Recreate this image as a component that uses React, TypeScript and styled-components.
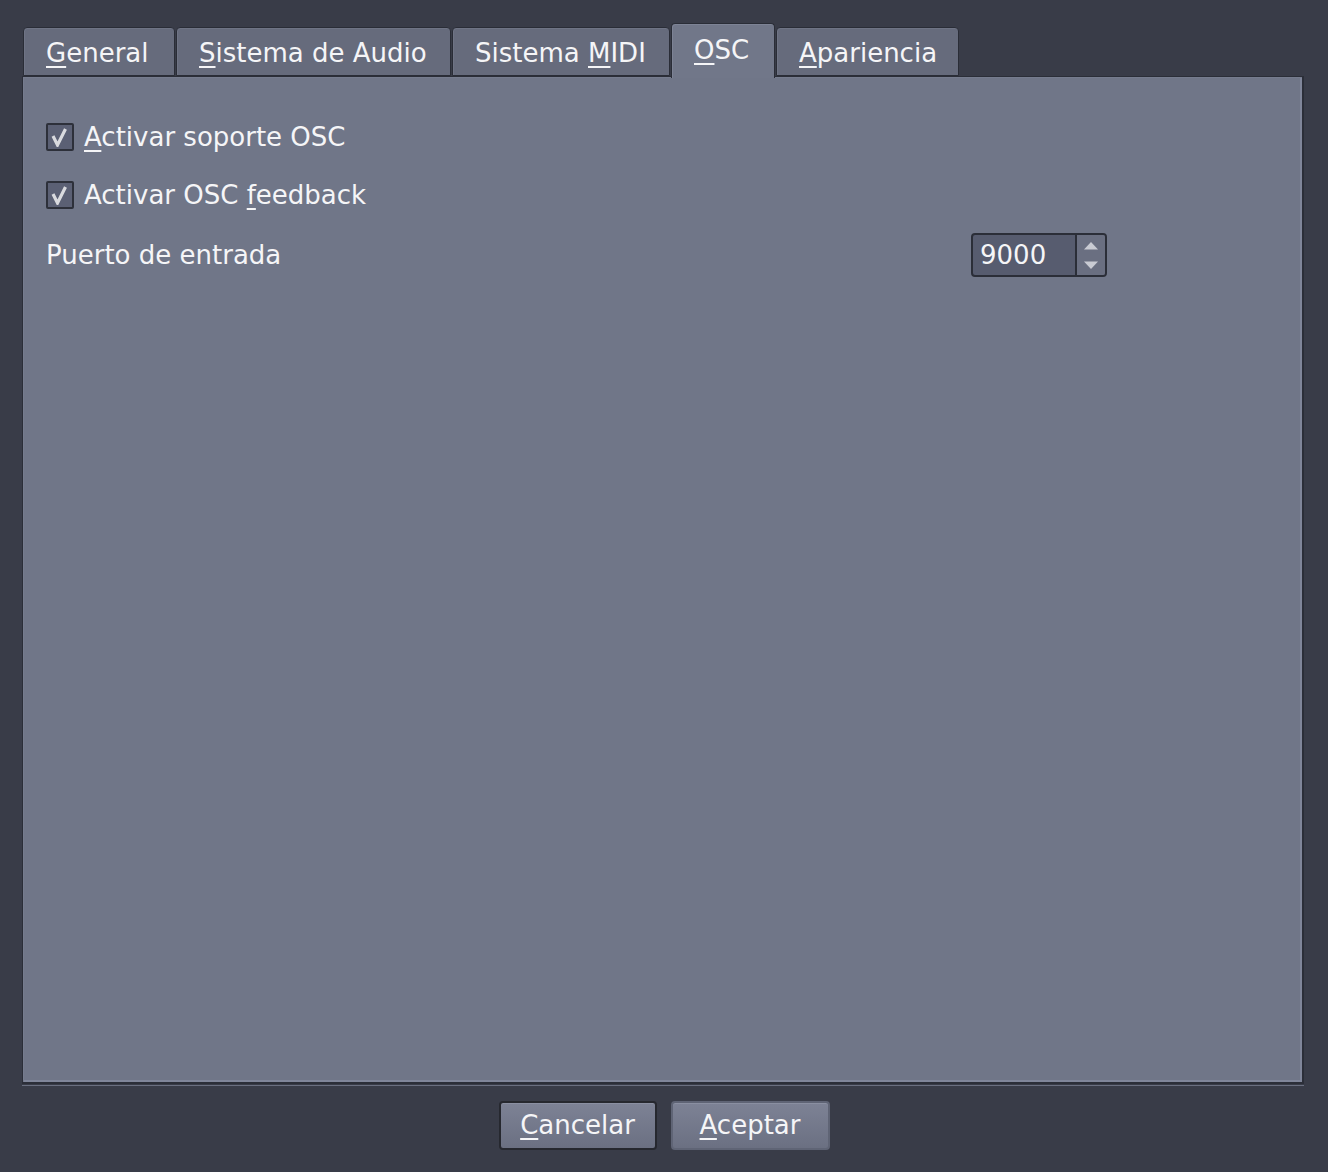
import React from "react";
import styled, { createGlobalStyle } from "styled-components";

const Global = createGlobalStyle`
  html, body {
    margin: 0;
    padding: 0;
    background: #393c48;
  }
  body {
    font-family: "DejaVu Sans", "Noto Sans", sans-serif;
    font-size: 26px;
    color: #f5f5f7;
  }
`;

const Window = styled.div`
  width: 1328px;
  height: 1172px;
  box-sizing: border-box;
  padding: 23px 24px 0 22px;
  display: flex;
  flex-direction: column;
  background: #393c48;
`;

const TabBar = styled.div`
  display: flex;
  align-items: flex-end;
  gap: 1px;
  height: 53px;
  padding-left: 1px;
  position: relative;
  z-index: 2;
`;

const Tab = styled.div<{ $active?: boolean; $w: number }>`
  box-sizing: border-box;
  width: ${(p) => p.$w}px;
  height: ${(p) => (p.$active ? "55px" : "49px")};
  margin-bottom: ${(p) => (p.$active ? "-2px" : "0")};
  padding: ${(p) => (p.$active ? "0 0 3px 22px" : "3px 0 0 22px")};
  display: flex;
  align-items: center;
  border: 1px solid #2a2d37;
  border-bottom: ${(p) => (p.$active ? "none" : "1px solid #2a2d37")};
  border-radius: 4px 4px 0 0;
  background: ${(p) => (p.$active ? "#717789" : "#666b7c")};
  box-shadow: inset 1px 1px 0 ${(p) => (p.$active ? "#7d8395" : "#6f7485")};
  white-space: nowrap;
  line-height: 1;
`;

const Mn = styled.u`
  text-decoration-thickness: 2px;
  text-underline-offset: 4px;
`;

const Panel = styled.div`
  box-sizing: border-box;
  height: 1008px;
  background: #707688;
  border: 1px solid #2b2e38;
  border-right-width: 2px;
  border-bottom-width: 2px;
  box-shadow: inset 1px 1px 0 #767c8e, inset -2px -2px 0 #80869a;
  padding: 40px 23px 0 23px;
  display: flex;
  flex-direction: column;
  gap: 18px;
`;

const Separator = styled.div`
  height: 1px;
  margin-top: 1px;
  background: #6a6f80;
`;

const CheckRow = styled.label`
  display: flex;
  align-items: center;
  height: 40px;
  gap: 10px;
  line-height: 1;
`;

const CheckBox = styled.span`
  box-sizing: border-box;
  width: 28px;
  height: 28px;
  border: 2px solid #2d303a;
  border-radius: 2px;
  background: #5b6074;
  display: flex;
  align-items: center;
  justify-content: center;
`;

const FormRow = styled.div`
  display: grid;
  grid-template-columns: 925px 136px 1fr;
  align-items: center;
  height: 44px;
  line-height: 1;
`;

const Spin = styled.div`
  box-sizing: border-box;
  height: 44px;
  border: 2px solid #2b2e38;
  border-radius: 4px;
  display: flex;
  overflow: hidden;
  background: #575c6f;
`;

const SpinText = styled.div`
  flex: 1;
  display: flex;
  align-items: center;
  padding-left: 7px;
  border-right: 2px solid #2b2e38;
`;

const SpinButtons = styled.div`
  width: 28px;
  display: flex;
  flex-direction: column;
  align-items: center;
  justify-content: space-between;
  padding: 6px 0 5px;
  box-sizing: border-box;
  background: #6a6f81;
`;

const ButtonRow = styled.div`
  display: flex;
  justify-content: center;
  gap: 14px;
  padding-top: 15px;
  padding-left: 2px;
`;

const Button = styled.button<{ $focus?: boolean }>`
  box-sizing: border-box;
  height: 49px;
  width: ${(p) => (p.$focus ? "158px" : "159px")};
  font-family: "DejaVu Sans", "Noto Sans", sans-serif;
  font-size: 26px;
  color: #f5f5f7;
  border-radius: 4px;
  border: 2px solid ${(p) => (p.$focus ? "#26282f" : "#5f6475")};
  background: linear-gradient(#7d8295, #6b7082);
  box-shadow: inset 0 1px 0 #8a8fa1;
  padding: 0 0 2px 0;
  line-height: 1;
`;

const Check = () => (
  <svg width="20" height="20" viewBox="0 0 20 20">
    <polyline
      points="3,9 7.5,18 15.5,2"
      fill="none"
      stroke="#d9dade"
      strokeWidth="3.2"
      strokeLinejoin="miter"
    />
  </svg>
);

const Arrow = ({ up }: { up?: boolean }) => (
  <svg width="16" height="9" viewBox="0 0 16 9">
    <polygon points={up ? "1,8.5 15,8.5 8,1" : "1,0.5 15,0.5 8,8"} fill="#c9cbd3" />
  </svg>
);

export default function App() {
  return (
    <>
      <Global />
      <Window>
        <TabBar>
          <Tab $w={152}>
            <span>
              <Mn>G</Mn>eneral
            </span>
          </Tab>
          <Tab $w={275}>
            <span>
              <Mn>S</Mn>istema de Audio
            </span>
          </Tab>
          <Tab $w={218}>
            <span>
              Sistema <Mn>M</Mn>IDI
            </span>
          </Tab>
          <Tab $active $w={104}>
            <span>
              <Mn>O</Mn>SC
            </span>
          </Tab>
          <Tab $w={183}>
            <span>
              <Mn>A</Mn>pariencia
            </span>
          </Tab>
        </TabBar>
        <Panel>
          <CheckRow>
            <CheckBox>
              <Check />
            </CheckBox>
            <span>
              <Mn>A</Mn>ctivar soporte OSC
            </span>
          </CheckRow>
          <CheckRow>
            <CheckBox>
              <Check />
            </CheckBox>
            <span>
              Activar OSC <Mn>f</Mn>eedback
            </span>
          </CheckRow>
          <FormRow>
            <span>Puerto de entrada</span>
            <Spin>
              <SpinText>9000</SpinText>
              <SpinButtons>
                <Arrow up />
                <Arrow />
              </SpinButtons>
            </Spin>
          </FormRow>
        </Panel>
        <Separator />
        <ButtonRow>
          <Button $focus>
            <Mn>C</Mn>ancelar
          </Button>
          <Button>
            <Mn>A</Mn>ceptar
          </Button>
        </ButtonRow>
      </Window>
    </>
  );
}
